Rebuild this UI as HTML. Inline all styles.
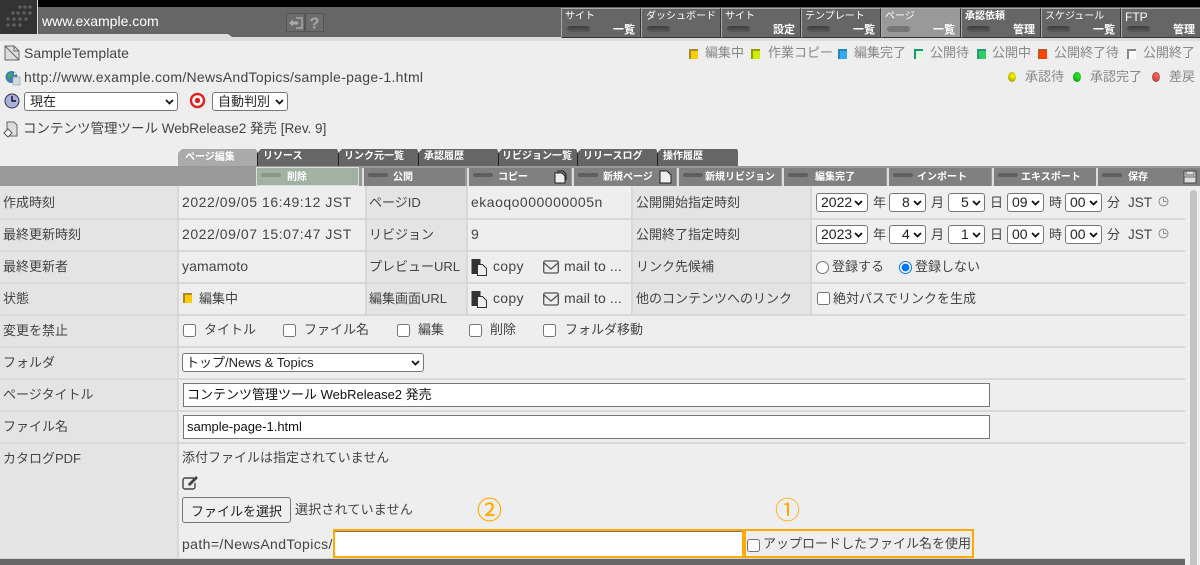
<!DOCTYPE html>
<html lang="ja"><head><meta charset="utf-8"><title>WebRelease2</title>
<style>
html,body{margin:0;padding:0;width:1200px;height:565px;overflow:hidden;background:#eee}
body{position:relative;font-family:"Liberation Sans","Noto Sans CJK JP",sans-serif;font-size:13px;color:#444}
.a,.t,select,input,button,svg{position:absolute}
.t{white-space:nowrap;line-height:18px;height:18px}
.d{font-size:14px;letter-spacing:.55px}
.m{font-size:14px;letter-spacing:.1px}
.l{color:#888}
.nb{position:absolute;top:8px;height:28px;width:78px;background:#666;border:1px solid #aaa;border-color:#aaa #333 #333 #aaa;color:#fff;font-size:10px;box-sizing:content-box}
.nb i{position:absolute;left:5px;top:17px;width:23px;height:6px;border-radius:3px;background:linear-gradient(#3e3e3e,#5a5a5a)}
.nb b{position:absolute;left:3px;top:1px;font-weight:400;line-height:14px;white-space:nowrap}
.nb u{position:absolute;right:5px;top:14px;font-weight:700;text-decoration:none;line-height:14px;font-size:11px}
.tab{position:absolute;top:149px;height:17px;background:linear-gradient(90deg,#222 1px,#666 1px);color:#fff;font-size:10px;font-weight:700;line-height:16px;box-sizing:border-box;padding-left:6px;white-space:nowrap;clip-path:polygon(4px 0,calc(100% - 1px) 0,100% 2px,100% 100%,0 100%,0 4px)}
.tb{position:absolute;top:168px;height:18px;background:#808080;border-left:2px solid #ddd;color:#fff;font-size:10px;font-weight:700;line-height:19px;box-sizing:border-box;white-space:nowrap}
.tb i{position:absolute;left:4px;top:5px;width:20px;height:4px;border-radius:3px;background:#5f5f5f}
.tb span{position:absolute;top:0}
.sq{position:absolute;width:9px;height:10px;box-sizing:border-box}
.dot{position:absolute;width:8px;height:10px;border-radius:50%}
.c1{position:absolute;background:#e4e4e4}
.hl{position:absolute;left:0;width:1185px;height:2px;background:#d8d8d8}
.vl{position:absolute;width:2px;background:#d8d8d8}
select{appearance:none;-webkit-appearance:none;font-family:"Liberation Sans","Noto Sans CJK JP",sans-serif;font-size:14px;height:19px;box-sizing:border-box;background:#fff;color:#222;border:1px solid #767676;border-radius:3px;padding:0 0 0 4px;margin:0;line-height:17px}
.cv{width:9px;height:6px;fill:none;stroke:#111;stroke-width:1.8}
input[type=checkbox],input[type=radio]{margin:0;width:13px;height:13px}
input[type=text]{box-sizing:border-box;border:1px solid #767676;background:#fff;font-family:"Liberation Sans","Noto Sans CJK JP",sans-serif;font-size:13px;color:#111;padding:0 3px 3px;margin:0;outline:0}
</style></head><body>

<!-- header -->
<div class="a" style="left:0;top:0;width:1200px;height:7px;background:#000"></div>
<div class="a" style="left:0;top:7px;width:1200px;height:30px;background:#666"></div>
<div class="a" style="left:0;top:37px;width:1200px;height:4px;background:#ddd"></div>
<svg style="left:0;top:34px" width="240" height="3"><polygon points="0,0 228,0 232,3 0,3" fill="#ddd"/></svg>
<div class="a" style="left:0;top:0;width:37px;height:34px;background:#333;border-right:1px solid #ddd"></div>
<svg style="left:0;top:0" width="37" height="34" fill="#5c5c5c"><circle cx="20" cy="7" r="1.8"/><circle cx="25" cy="7" r="1.8"/><circle cx="30" cy="7" r="1.8"/><circle cx="13" cy="13" r="1.8"/><circle cx="18" cy="13" r="1.8"/><circle cx="24" cy="13" r="1.8"/><circle cx="30" cy="13" r="1.8"/><circle cx="8" cy="19" r="1.8"/><circle cx="14" cy="19" r="1.8"/><circle cx="20" cy="19" r="1.8"/><circle cx="26" cy="19" r="1.8"/><circle cx="8" cy="25" r="1.8"/><circle cx="14" cy="25" r="1.8"/><circle cx="20" cy="25" r="1.8"/></svg>
<div class="t" style="left:42px;top:12px;color:#fff;font-size:14px">www.example.com</div>
<svg style="left:286px;top:13px" width="19" height="19"><rect x=".5" y=".5" width="18" height="18" fill="#6c6c6c" stroke="#555"/><path d="M3 10l4-3.5v2h5v3H7v2z" fill="#aaa"/><path d="M10 5h6v10h-6" fill="none" stroke="#aaa" stroke-width="1.4"/></svg>
<svg style="left:305px;top:13px" width="19" height="19"><rect x=".5" y=".5" width="18" height="18" fill="#6c6c6c" stroke="#555"/><text x="9.5" y="15.5" text-anchor="middle" font-family="Liberation Sans" font-size="16" font-weight="700" fill="#aaa">?</text></svg>

<div class="nb" style="left:561px"><b>サイト</b><i></i><u>一覧</u></div>
<div class="nb" style="left:641px"><b style="left:4px">ダッシュボード</b><i></i></div>
<div class="nb" style="left:721px"><b>サイト</b><i></i><u>設定</u></div>
<div class="nb" style="left:801px"><b>テンプレート</b><i></i><u>一覧</u></div>
<div class="nb" style="left:881px;background:#999"><b>ページ</b><i style="background:#777"></i><u>一覧</u></div>
<div class="nb" style="left:961px"><b style="font-weight:700">承認依頼</b><i></i><u>管理</u></div>
<div class="nb" style="left:1041px"><b>スケジュール</b><i></i><u>一覧</u></div>
<div class="nb" style="left:1121px"><b style="font-size:12px">FTP</b><i></i><u>管理</u></div>

<!-- info -->
<svg style="left:4px;top:45px" width="16" height="16"><path d="M1 1h9l5 5v9H1z" fill="#ddd" stroke="#666"/><path d="M1 1l14 14M10 1v5h5" fill="none" stroke="#666"/></svg>
<div class="t" style="left:24px;top:44px;font-size:14px;letter-spacing:.05px">SampleTemplate</div>
<svg style="left:4px;top:69px" width="17" height="17"><circle cx="7.5" cy="8" r="6" fill="#4a78b0"/><path d="M3 6l4-3 2 3-4 4z" fill="#3a6"/><path d="M10 3l3 2-3 1z" fill="#eee"/><rect x="9" y="8" width="7" height="8" fill="#cdd" stroke="#99a" stroke-width=".6"/></svg>
<div class="t" style="left:24px;top:68px;font-size:14px;letter-spacing:.3px">http://www.example.com/NewsAndTopics/sample-page-1.html</div>
<svg style="left:4px;top:93px" width="16" height="16"><circle cx="8" cy="8" r="7" fill="#aab0e0" stroke="#334"/><path d="M8 3v5h4" fill="none" stroke="#111" stroke-width="1.4"/></svg>
<select style="left:24px;top:92px;width:154px;height:19px;font-size:13px;padding-left:5px"><option>現在</option></select>
<svg class="cv" style="left:165px;top:99px" viewBox="0 0 9 6"><path d="M1 1l3.5 3.5L8 1"/></svg>
<svg style="left:189px;top:92px" width="17" height="17"><circle cx="8.5" cy="8.5" r="6.5" fill="#fff" stroke="#d22" stroke-width="2.4"/><circle cx="8.5" cy="8.5" r="2.7" fill="#d22"/></svg>
<select style="left:212px;top:92px;width:76px;height:19px;font-size:13px;padding-left:5px"><option>自動判別</option></select>
<svg class="cv" style="left:275px;top:99px" viewBox="0 0 9 6"><path d="M1 1l3.5 3.5L8 1"/></svg>
<svg style="left:3px;top:121px" width="16" height="17"><path d="M4 1h7l3 3v11H4z" fill="#ddd" stroke="#666"/><path d="M1 12l4-4 4 4-4 4z" fill="#fff" stroke="#555"/></svg>
<div class="t" style="left:23px;top:120px;font-size:13.5px">コンテンツ管理ツール WebRelease2 発売 [Rev. 9]</div>

<!-- legend -->
<div class="sq" style="left:689px;top:49px;background:#fc0;border-left:2px solid #a83;border-top:2px solid #a83"></div><div class="t l" style="left:705px;top:44px">編集中</div>
<div class="sq" style="left:751px;top:49px;background:#ce0;border-left:2px solid #990;border-top:2px solid #990"></div><div class="t l" style="left:768px;top:44px">作業コピー</div>
<div class="sq" style="left:838px;top:49px;background:#3ae;border-left:2px solid #28b;border-top:2px solid #28b"></div><div class="t l" style="left:854px;top:44px">編集完了</div>
<div class="sq" style="left:914px;top:49px;background:#dfd;border-left:2px solid #197;border-top:2px solid #197"></div><div class="t l" style="left:930px;top:44px">公開待</div>
<div class="sq" style="left:977px;top:49px;background:#3c6;border-left:2px solid #297;border-top:2px solid #297"></div><div class="t l" style="left:992px;top:44px">公開中</div>
<div class="sq" style="left:1038px;top:49px;background:#f40;border-left:2px solid #b52;border-top:2px solid #b52"></div><div class="t l" style="left:1054px;top:44px">公開終了待</div>
<div class="sq" style="left:1127px;top:49px;background:#fff;border-left:2px solid #888;border-top:2px solid #888"></div><div class="t l" style="left:1143px;top:44px">公開終了</div>
<div class="dot" style="left:1008px;top:72px;background:radial-gradient(circle at 60% 40%,#ff0,#880)"></div><div class="t l" style="left:1025px;top:68px">承認待</div>
<div class="dot" style="left:1073px;top:72px;background:radial-gradient(circle at 60% 40%,#3e3,#080)"></div><div class="t l" style="left:1090px;top:68px">承認完了</div>
<div class="dot" style="left:1152px;top:72px;background:radial-gradient(circle at 60% 40%,#f66,#933)"></div><div class="t l" style="left:1169px;top:68px">差戻</div>

<!-- tabs -->
<div class="tab" style="left:178px;width:79px;background:#aaa;padding-left:7px;line-height:18px">ページ編集</div>
<div class="tab" style="left:257px;width:81px">リソース</div>
<div class="tab" style="left:338px;width:80px">リンク元一覧</div>
<div class="tab" style="left:418px;width:80px">承認履歴</div>
<div class="tab" style="left:498px;width:79px;padding-left:4px">リビジョン一覧</div>
<div class="tab" style="left:577px;width:80px">リリースログ</div>
<div class="tab" style="left:657px;width:81px">操作履歴</div>

<!-- toolbar -->
<div class="a" style="left:0;top:166px;width:1200px;height:20px;background:#999"></div>
<div class="tb" style="left:256px;width:103px;height:19px;top:167px;background:#a2b2a2;border:1px solid #ddd"><i style="background:#8a9a8a"></i><span style="left:30px">削除</span></div>
<div class="tb" style="left:362px;width:103px"><i></i><span style="left:29px">公開</span></div>
<div class="tb" style="left:467px;width:104px"><i></i><span style="left:29px">コピー</span><svg style="left:85px;top:2px" width="13" height="14"><path d="M1 3h7l3 3v7H1z" fill="#eee" stroke="#222"/><path d="M4 3V1h5l3 3v6" fill="none" stroke="#222"/></svg></div>
<div class="tb" style="left:572px;width:104px"><i></i><span style="left:29px">新規ページ</span><svg style="left:85px;top:2px" width="13" height="14"><path d="M1 1h7l4 4v8H1z" fill="#eee" stroke="#222"/></svg></div>
<div class="tb" style="left:677px;width:104px"><i></i><span style="left:26px">新規リビジョン</span></div>
<div class="tb" style="left:782px;width:104px"><i></i><span style="left:31px">編集完了</span></div>
<div class="tb" style="left:887px;width:104px"><i></i><span style="left:28px">インポート</span></div>
<div class="tb" style="left:992px;width:104px"><i></i><span style="left:27px">エキスポート</span></div>
<div class="tb" style="left:1096px;width:104px"><i></i><span style="left:30px">保存</span><svg style="left:85px;top:2px" width="14" height="14"><path d="M1 1h12v12H1z" fill="#ddd" stroke="#444"/><path d="M3 1v4h8V1M1 7h12" fill="none" stroke="#666"/></svg></div>

<!-- table backgrounds -->
<div class="c1" style="left:0;top:186px;width:177px;height:373px"></div>
<div class="c1" style="left:365px;top:186px;width:101px;height:128px"></div>
<div class="c1" style="left:632px;top:186px;width:178px;height:128px"></div>
<div class="vl" style="left:177px;top:186px;height:373px"></div>
<div class="vl" style="left:365px;top:186px;height:128px"></div>
<div class="vl" style="left:466px;top:186px;height:128px"></div>
<div class="vl" style="left:631px;top:186px;height:128px"></div>
<div class="vl" style="left:810px;top:186px;height:128px"></div>
<div class="hl" style="top:218px"></div><div class="hl" style="top:250px"></div><div class="hl" style="top:282px"></div><div class="hl" style="top:314px"></div><div class="hl" style="top:346px"></div><div class="hl" style="top:378px"></div><div class="hl" style="top:410px"></div><div class="hl" style="top:442px"></div>
<div class="a" style="left:0;top:558px;width:1185px;height:7px;background:#666;border-top:1px solid #d4d4d4;box-sizing:border-box"></div>
<div class="a" style="left:1190px;top:190px;width:7px;height:375px;background:#c4c4c4;border-radius:4px 4px 0 0"></div>

<!-- labels -->
<div class="t" style="left:3px;top:194px">作成時刻</div>
<div class="t" style="left:3px;top:226px">最終更新時刻</div>
<div class="t" style="left:3px;top:258px">最終更新者</div>
<div class="t" style="left:3px;top:290px">状態</div>
<div class="t" style="left:3px;top:322px">変更を禁止</div>
<div class="t" style="left:3px;top:354px">フォルダ</div>
<div class="t" style="left:3px;top:386px">ページタイトル</div>
<div class="t" style="left:3px;top:418px">ファイル名</div>
<div class="t" style="left:3px;top:450px">カタログPDF</div>

<div class="t d" style="left:182px;top:193px">2022/09/05 16:49:12 JST</div>
<div class="t d" style="left:182px;top:225px">2022/09/07 15:07:47 JST</div>
<div class="t m" style="left:182px;top:257px">yamamoto</div>
<div class="sq" style="left:183px;top:293px;background:#fc0;border-left:2px solid #a83;border-top:2px solid #a83"></div>
<div class="t" style="left:199px;top:290px">編集中</div>

<div class="t" style="left:369px;top:194px">ページID</div>
<div class="t" style="left:369px;top:226px">リビジョン</div>
<div class="t" style="left:369px;top:258px">プレビューURL</div>
<div class="t" style="left:369px;top:290px">編集画面URL</div>
<div class="t" style="left:471px;top:193px;font-size:14px;letter-spacing:.5px">ekaoqo000000005n</div>
<div class="t" style="left:471px;top:225px;font-size:14px">9</div>

<svg style="left:471px;top:258px" width="17" height="18"><path d="M1 1.5h8v14H1z" fill="#333" stroke="#333"/><path d="M6.5 6.5h5l4 4v7h-9z" fill="#eee" stroke="#333"/></svg>
<div class="t m" style="left:493px;top:257px;letter-spacing:.3px">copy</div>
<svg style="left:543px;top:260px" width="16" height="14"><rect x=".7" y="1" width="14.6" height="12" rx="1.5" fill="none" stroke="#555" stroke-width="1.3"/><path d="M1 3l7 6 7-6" fill="none" stroke="#555" stroke-width="1.3"/></svg>
<div class="t m" style="left:564px;top:257px">mail to ...</div>
<svg style="left:471px;top:290px" width="17" height="18"><path d="M1 1.5h8v14H1z" fill="#333" stroke="#333"/><path d="M6.5 6.5h5l4 4v7h-9z" fill="#eee" stroke="#333"/></svg>
<div class="t m" style="left:493px;top:289px;letter-spacing:.3px">copy</div>
<svg style="left:543px;top:292px" width="16" height="14"><rect x=".7" y="1" width="14.6" height="12" rx="1.5" fill="none" stroke="#555" stroke-width="1.3"/><path d="M1 3l7 6 7-6" fill="none" stroke="#555" stroke-width="1.3"/></svg>
<div class="t m" style="left:564px;top:289px">mail to ...</div>

<div class="t" style="left:636px;top:194px">公開開始指定時刻</div>
<div class="t" style="left:636px;top:226px">公開終了指定時刻</div>
<div class="t" style="left:636px;top:258px">リンク先候補</div>
<div class="t" style="left:636px;top:290px">他のコンテンツへのリンク</div>

<!-- date row 1 -->
<select style="left:816px;top:193px;width:52px"><option>2022</option></select><svg class="cv" style="left:854px;top:200px" viewBox="0 0 9 6"><path d="M1 1l3.5 3.5L8 1"/></svg><div class="t" style="left:873px;top:194px">年</div>
<select style="left:889px;top:193px;width:37px;padding-left:12px"><option>8</option></select><svg class="cv" style="left:913px;top:200px" viewBox="0 0 9 6"><path d="M1 1l3.5 3.5L8 1"/></svg><div class="t" style="left:931px;top:194px">月</div>
<select style="left:948px;top:193px;width:37px;padding-left:12px"><option>5</option></select><svg class="cv" style="left:972px;top:200px" viewBox="0 0 9 6"><path d="M1 1l3.5 3.5L8 1"/></svg><div class="t" style="left:990px;top:194px">日</div>
<select style="left:1007px;top:193px;width:37px"><option>09</option></select><svg class="cv" style="left:1031px;top:200px" viewBox="0 0 9 6"><path d="M1 1l3.5 3.5L8 1"/></svg><div class="t" style="left:1049px;top:194px">時</div>
<select style="left:1065px;top:193px;width:37px"><option>00</option></select><svg class="cv" style="left:1089px;top:200px" viewBox="0 0 9 6"><path d="M1 1l3.5 3.5L8 1"/></svg><div class="t" style="left:1107px;top:194px">分</div>
<div class="t" style="left:1128px;top:194px;font-size:13.5px">JST</div>
<svg style="left:1158px;top:196px" width="11" height="11"><circle cx="5.5" cy="5.5" r="4.5" fill="none" stroke="#888"/><path d="M5.5 2.5v3h3" fill="none" stroke="#888"/></svg>
<!-- date row 2 -->
<select style="left:816px;top:225px;width:52px"><option>2023</option></select><svg class="cv" style="left:854px;top:232px" viewBox="0 0 9 6"><path d="M1 1l3.5 3.5L8 1"/></svg><div class="t" style="left:873px;top:226px">年</div>
<select style="left:889px;top:225px;width:37px;padding-left:12px"><option>4</option></select><svg class="cv" style="left:913px;top:232px" viewBox="0 0 9 6"><path d="M1 1l3.5 3.5L8 1"/></svg><div class="t" style="left:931px;top:226px">月</div>
<select style="left:948px;top:225px;width:37px;padding-left:12px"><option>1</option></select><svg class="cv" style="left:972px;top:232px" viewBox="0 0 9 6"><path d="M1 1l3.5 3.5L8 1"/></svg><div class="t" style="left:990px;top:226px">日</div>
<select style="left:1007px;top:225px;width:37px"><option>00</option></select><svg class="cv" style="left:1031px;top:232px" viewBox="0 0 9 6"><path d="M1 1l3.5 3.5L8 1"/></svg><div class="t" style="left:1049px;top:226px">時</div>
<select style="left:1065px;top:225px;width:37px"><option>00</option></select><svg class="cv" style="left:1089px;top:232px" viewBox="0 0 9 6"><path d="M1 1l3.5 3.5L8 1"/></svg><div class="t" style="left:1107px;top:226px">分</div>
<div class="t" style="left:1128px;top:226px;font-size:13.5px">JST</div>
<svg style="left:1158px;top:228px" width="11" height="11"><circle cx="5.5" cy="5.5" r="4.5" fill="none" stroke="#888"/><path d="M5.5 2.5v3h3" fill="none" stroke="#888"/></svg>

<input type="radio" name="r" style="left:816px;top:261px"><div class="t" style="left:832px;top:258px">登録する</div>
<input type="radio" name="r" checked style="left:899px;top:261px"><div class="t" style="left:915px;top:258px">登録しない</div>
<input type="checkbox" style="left:817px;top:292px"><div class="t" style="left:833px;top:290px">絶対パスでリンクを生成</div>

<input type="checkbox" style="left:183px;top:324px"><div class="t" style="left:204px;top:321px">タイトル</div>
<input type="checkbox" style="left:283px;top:324px"><div class="t" style="left:304px;top:321px">ファイル名</div>
<input type="checkbox" style="left:397px;top:324px"><div class="t" style="left:418px;top:321px">編集</div>
<input type="checkbox" style="left:469px;top:324px"><div class="t" style="left:490px;top:321px">削除</div>
<input type="checkbox" style="left:543px;top:324px"><div class="t" style="left:565px;top:321px">フォルダ移動</div>

<select style="left:182px;top:353px;width:242px;font-size:13px;padding-left:3px"><option>トップ/News &amp; Topics</option></select>
<svg class="cv" style="left:411px;top:360px" viewBox="0 0 9 6"><path d="M1 1l3.5 3.5L8 1"/></svg>
<input type="text" value="コンテンツ管理ツール WebRelease2 発売" style="left:183px;top:383px;width:807px;height:24px">
<input type="text" value="sample-page-1.html" style="left:183px;top:415px;width:807px;height:24px;padding-bottom:1px">

<div class="t" style="left:182px;top:449px">添付ファイルは指定されていません</div>
<svg style="left:182px;top:475px" width="17" height="15"><path d="M12 3H3a2 2 0 0 0-2 2v7a2 2 0 0 0 2 2h8a2 2 0 0 0 2-2V8" fill="none" stroke="#444" stroke-width="1.4"/><path d="M6 9l1 2 2-1 7-7-2-2z" fill="#444"/></svg>
<button style="left:182px;top:497px;width:109px;height:26px;box-sizing:border-box;background:#efefef;border:1px solid #767676;border-radius:3px;font:13px 'Liberation Sans','Noto Sans CJK JP',sans-serif;color:#222;padding:0">ファイルを選択</button>
<div class="t" style="left:295px;top:501px;letter-spacing:.2px">選択されていません</div>
<div class="t" style="left:182px;top:535px;font-size:14px;letter-spacing:.4px">path=/NewsAndTopics/</div>

<div class="t" style="left:477px;top:499px;color:#fa0;font-size:25px;line-height:24px;height:24px;-webkit-text-stroke:.3px #fa0">②</div>
<div class="t" style="left:775px;top:499px;color:#fa0;font-size:25px;line-height:24px;height:24px">①</div>
<input type="text" style="left:333px;top:529px;width:411px;height:29px;border:2px solid #fa0;box-shadow:inset 0 1px 0 #767676">
<div class="a" style="left:744px;top:529px;width:230px;height:29px;border:2px solid #fa0;box-sizing:border-box"></div>
<input type="checkbox" style="left:747px;top:539px">
<div class="t" style="left:763px;top:535px">アップロードしたファイル名を使用</div>
</body></html>
